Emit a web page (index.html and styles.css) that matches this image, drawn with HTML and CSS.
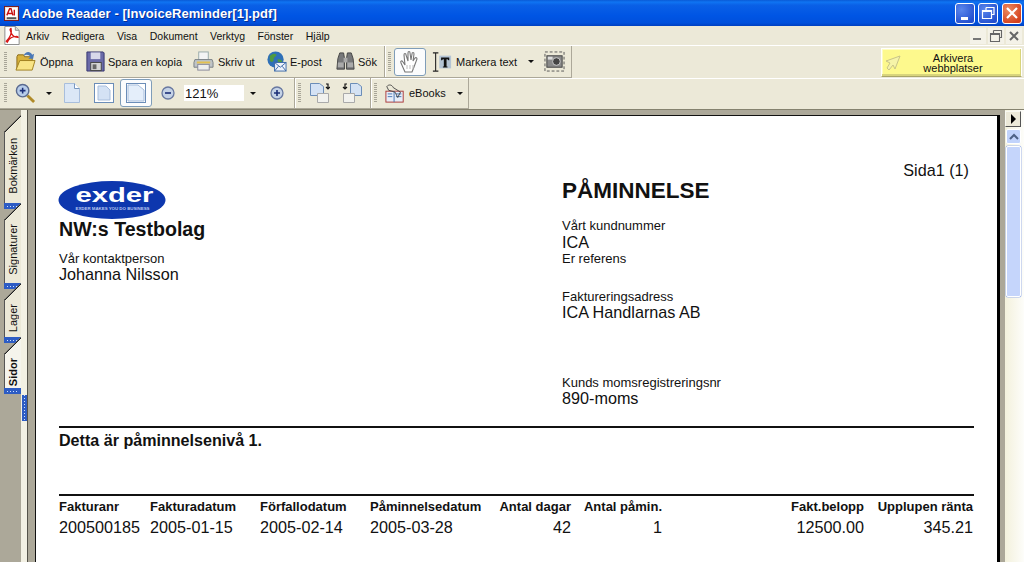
FILE: index.html
```html
<!DOCTYPE html>
<html lang="sv">
<head>
<meta charset="utf-8">
<title>Adobe Reader - [InvoiceReminder[1].pdf]</title>
<link rel="stylesheet" href="styles.css">
</head>
<body>
<div class="window">
  <header class="titlebar">
    <svg class="app-icon" viewBox="0 0 16 16"><rect x=".5" y=".5" width="15" height="15" fill="#e8ded6" stroke="#7a1818"/><rect x="2" y="2" width="12" height="10" fill="#fff"/><path d="M3 10 6 3h1.500l2 7M4.500 8h4M11 4v6" fill="none" stroke="#c81010" stroke-width="1.500"/><rect x="3" y="12" width="10" height="2" fill="#555"/></svg>
    <span class="title-text">Adobe Reader - [InvoiceReminder[1].pdf]</span>
    <div class="caption-btns">
      <button class="cap cap-blue"><svg viewBox="0 0 18 19"><rect x="5" y="13" width="7" height="3" fill="#fff"/></svg></button>
      <button class="cap cap-blue"><svg viewBox="0 0 18 19"><path d="M7 3.500h8v7h-2M7 3.500v3M3.500 6.500h9v8h-9zM3.500 7.500h9" fill="none" stroke="#fff" stroke-width="1.200"/></svg></button>
      <button class="cap cap-red"><svg viewBox="0 0 18 19"><path d="m4 4 10 10M14 4 4 14" stroke="#fff" stroke-width="2.200"/></svg></button>
    </div>
  </header>

  <nav class="menubar">
    <svg class="pdf-icon" viewBox="0 0 16 20"><path d="M.5.5h11l4 4v15H.5z" fill="#fff" stroke="#8a8a8a"/><path d="M11.500.5v4h4" fill="#ddd" stroke="#8a8a8a"/><path d="M2 16C6 12 8 7 7 3c0-1-1 0-1 1 1 4 3 8 8 8 1 0 0-1-1-1-4 0-8 2-10 6z" fill="none" stroke="#d81818" stroke-width="1.400"/></svg>
    <span>Arkiv</span><span>Redigera</span><span>Visa</span><span>Dokument</span><span>Verktyg</span><span>Fönster</span><span>Hjälp</span>
    <div class="doc-btns">
      <button class="doc-btn"><svg viewBox="0 0 14 14"><rect x="2" y="9" width="8" height="2" fill="#777"/></svg></button>
      <button class="doc-btn"><svg viewBox="0 0 14 14"><path d="M4.500 1.500h8v7h-2M4.500 1.500v3M1.500 4.500h9v8h-9zM1.500 5.500h9" fill="none" stroke="#666" stroke-width="1.100"/></svg></button>
      <button class="doc-btn"><svg viewBox="0 0 14 14"><path d="m3 3 8 8M11 3l-8 8" stroke="#666" stroke-width="2"/></svg></button>
    </div>
  </nav>

  <div class="toolrow row-one">
    <div class="toolbar bar-file">
      <i class="grip"></i>
      <span class="tool tool-open"><svg class="ico" viewBox="0 0 22 22"><path d="M2 19V6l1-2h6l1 2h8v4H6z" fill="#d8b23c" stroke="#8a6a18"/><path d="M1 20 5 10h16l-3 10z" fill="#f8e486" stroke="#a08020"/><path d="M9 5c2-5 7-5 9-1l2-1-1 5h-5l2-2c-1-2-4-3-7-1z" fill="#4a78b8"/></svg>Öppna</span>
      <span class="tool tool-save"><svg class="ico" viewBox="0 0 22 22"><path d="M2 1h17l1 1v19H2z" fill="#6a6aa8" stroke="#34346e"/><rect x="6" y="1.500" width="10" height="7" fill="#d8d8ea"/><rect x="6" y="12" width="11" height="8.500" fill="#d4d4d4" stroke="#444"/><rect x="8" y="14" width="4" height="5" fill="#666"/></svg>Spara en kopia</span>
      <span class="tool tool-print"><svg class="ico" viewBox="0 0 22 22"><rect x="6" y="1" width="10" height="8" fill="#f4f4f4" stroke="#9aa"/><path d="M2 9h18l1 3v5H1v-5z" fill="#bfc4c8" stroke="#7a8084"/><rect x="5" y="14" width="12" height="6" fill="#eee" stroke="#889"/><rect x="4" y="11" width="14" height="2" fill="#e4c050"/></svg>Skriv ut</span>
      <span class="tool tool-mail"><svg class="ico" viewBox="0 0 22 22"><circle cx="10" cy="9" r="8.500" fill="#2f70b8"/><path d="M4 5c3-2 5-3 7-1 0 2-3 2-3 5s-3 3-4 1zM12 9c2-1 4 0 5 2-1 2-3 3-4 2z" fill="#4f9a40"/><rect x="9" y="12" width="12" height="9" fill="#eef2fa" stroke="#3a68a8"/><path d="m9 12 6 5 6-5M9 21l4-5M21 21l-4-5" fill="none" stroke="#3a68a8"/></svg>E-post</span>
      <span class="tool tool-find"><svg class="ico" viewBox="0 0 22 22"><path d="M3 8 5 2h4l1 6v11H2zM19 8l-2-6h-4l-1 6v11h8z" fill="#77787a" stroke="#444"/><rect x="9" y="7" width="4" height="5" fill="#aaa"/><rect x="3" y="12" width="6" height="5" fill="#aaaaaa"/><rect x="13" y="12" width="6" height="5" fill="#aaaaaa"/></svg>Sök</span>
    </div>
    <div class="toolbar bar-select">
      <i class="grip"></i>
      <span class="pressed hand-btn"><svg class="hand" viewBox="0 0 22 24"><path d="M6 22 2 13c-1-2 1-3 2-1l2 3-1-10c0-2 2-2 2 0l2 6V3c0-2 2-2 2 0l1 7 1-6c0-2 2-2 2 0l-1 7 2-3c1-1 2 0 2 1l-3 8-2 5z" fill="#fff" stroke="#777" stroke-width="1.100"/><path d="M8 15v4M11 15v4M14 15v4" stroke="#bbb"/></svg></span>
      <span class="tool tool-select"><svg class="ico-t" viewBox="0 0 22 22"><path d="M1 1h3v20H1m3 0h3M4 1h3" fill="none" stroke="#222" stroke-width="1.200"/><rect x="8" y="4" width="13" height="14" fill="#b4c4d4"/><path d="M10 6h9v3h-1l-1-1h-1v8h1v1h-5v-1h1V8h-1l-1 1h-1z" fill="#111"/></svg>Markera text<i class="caret caret-select"></i></span>
      <span class="camera"><svg viewBox="0 0 22 22"><rect x="1" y="1" width="20" height="20" fill="none" stroke="#555" stroke-dasharray="3 2"/><rect x="3" y="5" width="16" height="12" fill="#8a8a8a" stroke="#444"/><circle cx="13" cy="11" r="4" fill="#444" stroke="#ccc"/><rect x="4" y="6" width="5" height="3" fill="#ddd"/></svg></span>
    </div>
    <div class="archive"><svg viewBox="0 0 16 16"><path d="M15 1 1 6l4 2-3 5 2 2 4-5 2 4z" fill="#f6f4a8" stroke="#c8c488"/></svg><span class="archive-text">Arkivera<br>webbplatser</span></div>
  </div>

  <div class="toolrow row-two">
    <div class="toolbar bar-zoom">
      <i class="grip"></i>
      <span class="zoom-tool"><svg class="ico" viewBox="0 0 22 22"><path d="m13 13 7 7" stroke="#b08a28" stroke-width="3"/><circle cx="8" cy="8" r="6.500" fill="#b8cdea" stroke="#5a6a90" stroke-width="1.500"/><path d="M8 5v6M5 8h6" stroke="#1c2f78" stroke-width="1.600"/></svg><i class="caret"></i></span>
      <span class="page-btn page-one"><svg viewBox="0 0 16 20"><path d="M.5.500h10l5 5v14H.5z" fill="#dbe7f6" stroke="#a8bedc"/><path d="M10.500.500v5h5" fill="#fff" stroke="#7898c0"/></svg></span>
      <span class="page-btn page-two"><svg viewBox="0 0 20 20"><rect x=".5" y=".5" width="19" height="19" fill="#fff" stroke="#6b8db8"/><path d="M4 3h8l4 4v10H4z" fill="#d4e2f4" stroke="#a8bedc"/></svg></span>
      <span class="pressed page-on"><svg viewBox="0 0 20 20"><rect x=".5" y=".5" width="19" height="19" fill="#fff" stroke="#6b8db8"/><path d="M2 2h10l6 5v11H2z" fill="#e4eefa" stroke="#a8bedc"/></svg></span>
      <span class="zoom-step zoom-out"><svg viewBox="0 0 14 14"><circle cx="7" cy="7" r="6" fill="#c4d2e6" stroke="#6878a0" stroke-width="1.300"/><path d="M4 7h6" stroke="#1c2f78" stroke-width="1.600"/></svg></span>
      <span class="zoom-field">121%</span><i class="caret caret-field"></i>
      <span class="zoom-step"><svg viewBox="0 0 14 14"><circle cx="7" cy="7" r="6" fill="#c4d2e6" stroke="#6878a0" stroke-width="1.300"/><path d="M7 4v6M4 7h6" stroke="#1c2f78" stroke-width="1.600"/></svg></span>
    </div>
    <div class="toolbar bar-rotate">
      <i class="grip"></i>
      <span class="rotate"><svg viewBox="0 0 20 20"><path d="M.5.500h9l4 3v9h-13z" fill="#d4e2f4" stroke="#6b8db8"/><path d="M7.500 10.500h11v9h-11z" fill="#f2f2ee" stroke="#aaa"/><path d="M16 1h2v5m-2-2 2 2 2-2" fill="none" stroke="#111" stroke-width="1.200"/></svg></span>
      <span class="rotate"><svg viewBox="0 0 20 20"><path d="M8.500.500h7l4 3v9h-11z" fill="#d4e2f4" stroke="#6b8db8"/><path d="M1.500 10.500h11v9h-11z" fill="#f2f2ee" stroke="#aaa"/><path d="M5 1H3v5m-2-2 2 2 2-2" fill="none" stroke="#111" stroke-width="1.200"/></svg></span>
    </div>
    <div class="toolbar bar-ebooks">
      <i class="grip"></i>
      <span class="tool tool-ebooks"><svg class="ico" viewBox="0 0 22 22"><rect x="1" y="9" width="19" height="12" fill="#e8eef8" stroke="#a83030"/><path d="M10 9v12M3 12h5M3 15h5M12 12h6M12 15h6" stroke="#4070b0"/><path d="M2 4c2-3 6-2 7 1l8 5-3 6-3-6-7-2z" fill="none" stroke="#444"/></svg>eBooks<i class="caret caret-ebooks"></i></span>
    </div>
  </div>

  <div class="workspace">
    <aside class="tabs">
      <div class="tab-list">
        <div class="tab tab-marks"><span class="tab-label">Bokmärken</span></div>
        <div class="tab tab-signs"><span class="tab-label">Signaturer</span></div>
        <div class="tab tab-layers"><span class="tab-label">Lager</span></div>
        <div class="tab tab-pages"><span class="tab-label">Sidor</span></div>
      </div>
      <div class="tab-strip"><div class="splitter"></div></div>
    </aside>
    <main class="viewer">
      <article class="page">
        <p class="page-no">Sida1 (1)</p>
        <div class="head">
          <div class="sender">
            <svg class="logo" viewBox="0 0 107 38">
              <ellipse cx="53.500" cy="19" rx="53.500" ry="19" fill="#0d37ae"/>
              <text x="17" y="21" textLength="78" lengthAdjust="spacingAndGlyphs" class="logo-word">exder</text>
              <text x="17" y="28.500" textLength="74" lengthAdjust="spacingAndGlyphs" class="logo-tag">EXDER MAKES YOU DO BUSINESS</text>
            </svg>
            <h2 class="company">NW:s Testbolag</h2>
            <p class="label label-contact">Vår kontaktperson</p>
            <p class="value">Johanna Nilsson</p>
          </div>
          <div class="recipient">
            <h1 class="doc-title">PÅMINNELSE</h1>
            <p class="label label-customer">Vårt kundnummer</p>
            <p class="value">ICA</p>
            <p class="label">Er referens</p>
            <p class="label label-address">Faktureringsadress</p>
            <p class="value">ICA Handlarnas AB</p>
            <p class="label label-vat">Kunds momsregistreringsnr</p>
            <p class="value">890-moms</p>
          </div>
        </div>
        <div class="notice">Detta är påminnelsenivå 1.</div>
        <div class="table">
          <b>Fakturanr</b><b>Fakturadatum</b><b>Förfallodatum</b><b>Påminnelsedatum</b><b class="num">Antal dagar</b><b class="num">Antal påmin.</b><b class="num">Fakt.belopp</b><b class="num">Upplupen ränta</b>
          <span>200500185</span><span>2005-01-15</span><span>2005-02-14</span><span>2005-03-28</span><span class="num">42</span><span class="num">1</span><span class="num">12500.00</span><span class="num">345.21</span>
        </div>
      </article>
    </main>
    <div class="scroll">
      <button class="pane-toggle"></button>
      <button class="scroll-up"><svg viewBox="0 0 12 12"><path d="m2 8 4-4 4 4" fill="none" stroke="#4d6185" stroke-width="2"/></svg></button>
      <div class="thumb"></div>
    </div>
  </div>
</div>
</body>
</html>
```
FILE: styles.css
```css
* { box-sizing: border-box; }
html, body { margin: 0; height: 100%; overflow: hidden; }
body { font-family: "Liberation Sans", sans-serif; }
p, h1, h2 { margin: 0; font-weight: normal; }
i { display: block; font-style: normal; }
.window { width: 1024px; height: 562px; display: flex; flex-direction: column; background: #ece9d8; overflow: hidden; }

.titlebar { height: 26px; flex: none; display: flex; align-items: center; padding: 0 2px 0 4px; color: #fff;
  background: linear-gradient(#0a5ad6 0, #0f74f2 8%, #0a60e6 20%, #0055e4 60%, #0050dc 88%, #0040c0 100%); }
.app-icon { width: 15px; height: 15px; flex: none; margin-right: 3px; }
.title-text { font: bold 13px "Liberation Sans", sans-serif; letter-spacing: .05px; text-shadow: 1px 1px #0a2f90; }
.caption-btns { margin-left: auto; display: flex; gap: 3px; }
.cap { width: 20px; height: 21px; padding: 0; border: 1px solid #fff; border-radius: 3px; }
.cap svg { display: block; width: 18px; height: 19px; }
.cap-blue { background: radial-gradient(circle at 30% 30%, #5a86ec, #2450cf 80%); }
.cap-red { background: radial-gradient(circle at 30% 30%, #ec8a60, #d4401c 80%); margin-left: 1px; }

.menubar { height: 20px; flex: none; display: flex; align-items: center; gap: 12.500px; font: 10.500px "Liberation Sans", sans-serif; color: #111; border-bottom: 1px solid #fff; }
.pdf-icon { width: 16px; height: 19px; margin: 0 -6.500px 0 4px; flex: none; }
.doc-btns { margin-left: auto; display: flex; gap: 2px; padding-right: 2px; }
.doc-btn { width: 16px; height: 16px; padding: 0; border: 0; background: #f4f2e8; }
.doc-btn svg { display: block; width: 14px; height: 14px; margin: 1px; }

.toolrow { flex: none; display: flex; font: 11px "Liberation Sans", sans-serif; color: #111; }
.row-one { height: 32px; }
.row-two { height: 31px; box-shadow: inset 0 1px #fff; }
.toolbar { display: flex; align-items: center; height: 100%; flex: none; border-right: 1px solid #aca899; border-bottom: 1px solid #aca899; box-shadow: inset 1px 0 #fff; padding-left: 3px; }
.toolbar:first-child { padding-left: 4px; box-shadow: none; }
.bar-file { width: 385px; }
.bar-select { width: 187px; }
.bar-zoom { width: 295px; }
.bar-rotate { width: 76px; }
.bar-ebooks { width: 98px; }
.grip { width: 3px; height: 20px; margin-right: 8px; background: repeating-linear-gradient(#a8a598 0 1px, transparent 1px 2px); flex: none; }
.bar-rotate .grip { margin-right: 9px; }
.tool { display: flex; align-items: center; white-space: nowrap; flex: none; }
.ico { width: 21px; height: 21px; flex: none; margin-right: 4px; }
.tool-open { width: 70px; }
.tool-save { width: 108px; } .tool-save .ico { margin-right: 2px; }
.tool-print { width: 73px; }
.tool-mail { width: 69px; } .tool-mail .ico { margin-right: 3px; }
.tool-find .ico { margin-right: 2px; }
.ico-t { width: 20px; height: 22px; flex: none; margin-right: 4px; }
.caret { width: 0; height: 0; border: 3px solid transparent; border-top: 3px solid #111; border-bottom: 0; flex: none; }
.caret-select { margin: 0 10px 0 11px; }
.caret-ebooks { margin-left: 11px; }
.pressed { display: flex; align-items: center; justify-content: center; background: #fbfcfd; border: 1px solid #7f9db9; border-radius: 3px; flex: none; }
.hand-btn { width: 32px; height: 28px; margin: 0 6px 0 -5px; }
.hand { width: 22px; height: 24px; }
.camera svg { display: block; width: 21px; height: 21px; }
.archive { width: 141px; height: 29px; margin: 2px 2px 0 auto; display: flex; align-items: center; border: 1px solid #fff; border-bottom-color: #a8a468; background: #fdf98d; box-shadow: inset -1px -2px #d8d47c, inset 1px 1px #fffec0; font: 11px/10px "Liberation Sans", sans-serif; }
.archive svg { width: 16px; height: 16px; margin-left: 3px; flex: none; }
.archive-text { flex: 1; text-align: center; padding-right: 16px; }

.zoom-tool { display: flex; align-items: center; margin-right: 12px; }
.zoom-tool .ico { margin-right: 10px; }
.page-btn svg { display: block; height: 20px; }
.page-one { margin-right: 14px; } .page-one svg { width: 16px; }
.page-two { margin-right: 6px; } .page-two svg { width: 20px; }
.page-on { width: 32px; height: 28px; margin-right: 9px; }
.page-on svg { width: 20px; height: 20px; }
.zoom-step svg { display: block; width: 14px; height: 14px; }
.zoom-out { margin-right: 9px; }
.zoom-field { width: 60px; height: 16px; background: #fff; padding: 1px; font: 13px/15px "Liberation Sans", sans-serif; }
.caret-field { margin: 0 14px 0 6px; }
.rotate { margin-right: 12px; }
.rotate svg { display: block; width: 20px; height: 20px; }
.tool-ebooks .ico { width: 20px; height: 20px; margin-right: 4px; }

.workspace { flex: 1; min-height: 0; display: flex; border-top: 1px solid #85826f; background: #aca899; }
.tabs { width: 28px; flex: none; display: flex; padding-left: 4px; }
.tab-list { width: 17px; padding-top: 5px; flex: none; display: flex; flex-direction: column; }
.tab { position: relative; flex: none; background: #ece9d8; display: flex; flex-direction: column; justify-content: flex-end; align-items: center; box-shadow: inset 1px 0 #555; clip-path: polygon(0 17px, 100% 0, 100% 100%, 0 100%); margin-top: -6px; border-bottom: 6px solid #2d5cc4; font-size: 11px; color: #111; }
.tab::before { content: ""; position: absolute; left: 0; top: 0; width: 17px; height: 17px; background: linear-gradient(to bottom right, #222 0, #222 calc(50% + .8px), transparent calc(50% + .8px)); }
.tab::after { content: ""; position: absolute; left: 3px; right: 2px; bottom: -4px; height: 1px; background: repeating-linear-gradient(90deg, #cfe0ff 0 1px, transparent 1px 3px); }
.tab-marks { height: 94px; margin-top: 0; }
.tab-signs { height: 86px; }
.tab-layers { height: 60px; }
.tab-pages { height: 57px; background: #f5f4ec; font-weight: bold; }
.tab-label { writing-mode: vertical-rl; rotate: 180deg; white-space: nowrap; }
.tab-marks .tab-label { margin-bottom: 9px; }
.tab-signs .tab-label { margin-bottom: 8px; }
.tab-layers .tab-label { margin-bottom: 5px; }
.tab-pages .tab-label { margin-bottom: 2px; }
.tab-strip { width: 7px; flex: none; background: #f3f1e4; border-right: 1px solid #55534a; padding: 285px 0 0 1px; }
.splitter { width: 5px; height: 26px; background: #2d5cc4; background-image: repeating-linear-gradient(#cfe0ff 0 1px, transparent 1px 3px); background-size: 1px 100%; background-position: center; background-repeat: no-repeat; }

.viewer { flex: 1; min-width: 0; padding: 5px 8px 0 7px; overflow: hidden; }
.page { background: #fff; height: 480px; border-left: 1px solid #111; border-top: 1px solid #111; box-shadow: 3px 0 #000; padding: 0 23px; font-family: "Liberation Sans", Arial, sans-serif; color: #111; }
.page-no { font-size: 16.200px; line-height: 18px; text-align: right; padding: 45px 5px 1px 0; }
.head { display: flex; height: 249px; }
.sender { width: 503px; padding-top: 1px; }
.logo { display: block; width: 108px; height: 38px; margin-left: -1px; }
.logo-word { font: bold 21px "Liberation Sans", sans-serif; fill: #fff; }
.logo-tag { font: bold 3px "Liberation Sans", sans-serif; fill: #b8c6ee; }
.company { font: bold 19.600px/20px "Liberation Sans", sans-serif; }
.label { font-size: 13px; line-height: 16px; }
.value { font-size: 16.200px; line-height: 16px; margin-top: -1px; padding-bottom: 1px; }
.label-contact { margin-top: 12px; }
.doc-title { font: bold 22.500px/26px "Liberation Sans", sans-serif; margin-top: -2px; }
.label-customer { margin-top: 14px; padding-bottom: 1px; }
.label-address { margin-top: 22px; }
.label-vat { margin-top: 54px; }
.notice { border-top: 2px solid #111; font: bold 16.100px/24px "Liberation Sans", sans-serif; height: 68px; margin-top: -3px; }
.table { border-top: 2px solid #111; display: grid; grid-template-columns: 91px 110px 110px 111px 90px 91px 202px 109px; padding: 3px 1px 0 0; font-size: 16.200px; }
.table b { font-size: 13px; line-height: 16px; padding-bottom: 3px; white-space: nowrap; }
.table span { line-height: 18px; white-space: nowrap; }
.num { text-align: right; }

.scroll { width: 19px; flex: none; display: flex; flex-direction: column; padding-top: 1px; background: linear-gradient(90deg, #f3f1dc, #fdfdfa); }
.pane-toggle { width: 16px; height: 16px; flex: none; padding: 0; border: 1px solid #f8f8f0; border-right-color: #555; border-bottom-color: #555; background: #ece9d8; position: relative; margin-bottom: 2px; }
.pane-toggle::after { content: ""; position: absolute; left: 5px; top: 2px; border: 5px solid transparent; border-left: 5px solid #000; border-right: 0; }
.scroll-up { width: 15px; height: 15px; flex: none; padding: 0; border: 1px solid #fff; border-radius: 2px; background: #c1d3fb; margin-left: 1px; }
.scroll-up svg { display: block; width: 12px; height: 12px; margin: auto; }
.thumb { width: 15px; height: 151px; flex: none; margin: 2px 0 0 1px; background: #c5d5fb; border: 1px solid #fff; border-radius: 2px; box-shadow: 0 0 0 .5px #a0b4e8; }
```
